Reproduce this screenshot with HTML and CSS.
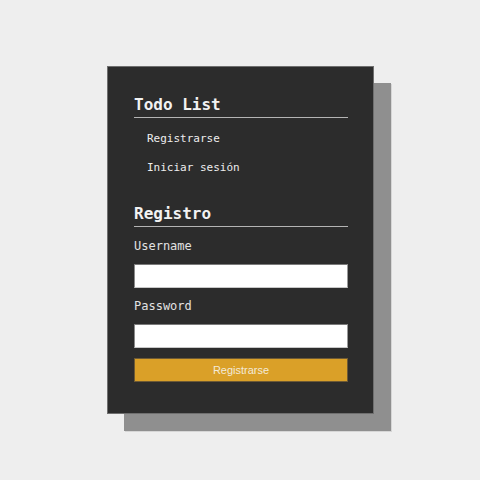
FILE: index.html
```html
<!DOCTYPE html>
<html lang="es">
<head>
<meta charset="utf-8">
<title>Todo List</title>
<link rel="stylesheet" href="styles.css">
</head>
<body>
<main class="card">
  <h1 class="title">Todo List</h1>
  <ul class="nav">
    <li><a href="#">Registrarse</a></li>
    <li><a href="#">Iniciar sesión</a></li>
  </ul>
  <h2 class="title section">Registro</h2>
  <form class="form">
    <label class="label" for="u">Username</label>
    <input class="input" id="u" type="text">
    <label class="label" for="p">Password</label>
    <input class="input" id="p" type="password">
    <button class="btn" type="button">Registrarse</button>
  </form>
</main>
</body>
</html>
```
FILE: styles.css
```css
html, body {
  margin: 0;
  padding: 0;
}
body {
  box-sizing: border-box;
  background: #eeeeee;
  height: 480px;
  padding-left: 1px;
  display: flex;
  align-items: center;
  justify-content: center;
  font-family: "DejaVu Sans Mono", monospace;
}
.card {
  box-sizing: border-box;
  width: 267px;
  height: 348px;
  background: #2c2c2c;
  border: 1px solid #6f6f6f;
  padding: 28px 25px 30px 26px;
  box-shadow: 17px 17px 0 0 #8f8f8f, 18px 18px 0 0 #d6d6d6;
  display: flex;
  flex-direction: column;
}
.title {
  margin: 0;
  font-size: 16px;
  line-height: 20px;
  font-weight: bold;
  color: #f2f2f2;
  padding-bottom: 2px;
  border-bottom: 1px solid #b4b4b4;
}
.section {
  margin-top: 29px;
}
.nav {
  list-style: none;
  margin: 13px 0 0 0;
  padding: 0 0 0 13px;
  display: flex;
  flex-direction: column;
  gap: 14px;
}
.nav li {
  line-height: 15px;
  font-size: 11px;
}
.nav a {
  color: #eeeeee;
  text-decoration: none;
}
.form {
  display: flex;
  flex-direction: column;
  margin-top: 11px;
}
.label {
  font-size: 12px;
  line-height: 16px;
  color: #e2e2e2;
  margin-bottom: 10px;
}
.input {
  box-sizing: border-box;
  width: 100%;
  height: 24px;
  margin: 0 0 10px 0;
  background: #ffffff;
  border: 1px solid;
  border-color: #7a7a7a #9a9a9a #c8c8c8 #8a8a8a;
  padding: 0 4px;
}
.btn {
  box-sizing: border-box;
  width: 100%;
  height: 24px;
  margin: 0;
  background: #daa028;
  border: 1px solid #6e5a35;
  color: #f3ead8;
  font-family: "Liberation Sans", Arial, sans-serif;
  font-size: 11px;
  padding: 0;
}
```
